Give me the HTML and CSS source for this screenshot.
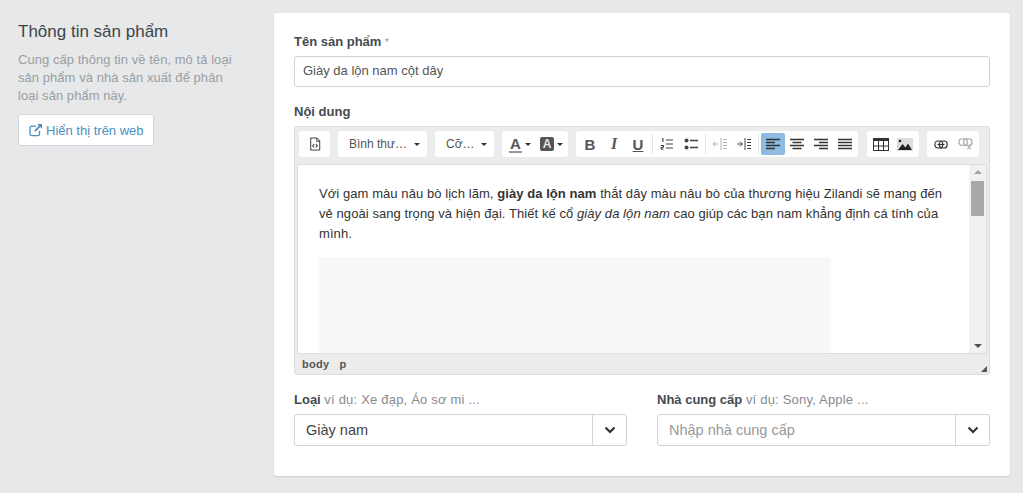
FILE: index.html
```html
<!DOCTYPE html>
<html lang="vi">
<head>
<meta charset="utf-8">
<title>Thông tin sản phẩm</title>
<link rel="stylesheet" href="styles.css">
</head>
<body>
<div class="page">
  <aside class="intro">
    <h2>Thông tin sản phẩm</h2>
    <p>Cung cấp thông tin về tên, mô tả loại sản phẩm và nhà sản xuất để phân loại sản phẩm này.</p>
    <a class="web-btn" href="#">
      <svg class="ext" viewBox="0 0 14 14" width="14" height="14"><path d="M10.500 8v3a1.600 1.600 0 0 1-1.600 1.600H2.600A1.600 1.600 0 0 1 1 11V4.800a1.600 1.600 0 0 1 1.600-1.600H7" fill="none" stroke="currentColor" stroke-width="1.300"/><path d="M8.200 1h4.800v4.800l-1.700-1.700L6.600 8.800 5.200 7.400 9.900 2.700z" fill="currentColor"/></svg>
      Hiển thị trên web</a>
  </aside>
  <main class="card">
    <div class="field">
      <label class="lbl top">Tên sản phẩm <span class="req">*</span></label>
      <div class="input">Giày da lộn nam cột dây</div>
    </div>
    <div class="field editor-field">
      <label class="lbl top">Nội dung</label>
      <div class="editor">
        <div class="toolbar">
          <div class="group"><span class="tb w31"><svg viewBox="0 0 14 16" width="12" height="14"><path d="M2 1h7l3.500 3.500V15H2z" fill="none" stroke="#444" stroke-width="1.200"/><path d="M9 1v4h3.500" fill="none" stroke="#444"/><path d="M6 8 4.300 10 6 12M8 8l1.700 2L8 12" fill="none" stroke="#333" stroke-width="1.200"/></svg></span></div>
          <div class="group drop w89"><span class="drop-text">Bình thư…</span><i class="caret"></i></div>
          <div class="group drop w59"><span class="drop-text">Cỡ…</span><i class="caret"></i></div>
          <div class="group">
            <span class="tb w33 color-a"><span class="font-a">A</span><i class="caret sm"></i></span>
            <span class="tb w33 color-b"><span class="back-a">A</span><i class="caret sm"></i></span>
          </div>
          <div class="group fmt-group">
            <span class="tb w24 fmt">B</span>
            <span class="tb w24 fmt it">I</span>
            <span class="tb w24 fmt un">U</span>
            <i class="sep"></i>
            <span class="tb w24"><svg viewBox="0 0 14 14" width="14" height="14"><path d="M6 3h7M6 7h7M6 11h7" stroke="#444" stroke-width="1.200"/><path d="M2 1.500h1V5M1 8.500h2.500v1.800H1v1.800h2.500" fill="none" stroke="#333"/></svg></span>
            <span class="tb w24"><svg viewBox="0 0 14 14" width="14" height="14"><circle cx="2.500" cy="3.500" r="2" fill="#444"/><circle cx="2.500" cy="10.500" r="2" fill="#444"/><path d="M6 3.500h8M6 10.500h8" stroke="#444" stroke-width="1.500"/></svg></span>
            <i class="sep"></i>
            <span class="tb w24 dim"><svg viewBox="0 0 14 14" width="14" height="14"><path d="M8 1v12M10 2.500h4M10 5.500h4M10 8.500h4M10 11.500h4" stroke="#444" stroke-width="1"/><path d="M5 7H0M2.500 4.500 0 7l2.500 2.500" fill="none" stroke="#444"/></svg></span>
            <span class="tb w24"><svg viewBox="0 0 14 14" width="14" height="14"><path d="M8 1v12M10 2.500h4M10 5.500h4M10 8.500h4M10 11.500h4" stroke="#444" stroke-width="1"/><path d="M0 7h5M3 4.500 5.500 7 3 9.500" fill="none" stroke="#444"/></svg></span>
            <i class="sep"></i>
            <span class="tb w24 active"><svg viewBox="0 0 14 12" width="14" height="12"><path d="M0 1.500h14M0 4.500h9M0 7.500h14M0 10.500h9" stroke="#333" stroke-width="1.500"/></svg></span>
            <span class="tb w24"><svg viewBox="0 0 14 12" width="14" height="12"><path d="M0 1.500h14M2.500 4.500h9M0 7.500h14M2.500 10.500h9" stroke="#333" stroke-width="1.500"/></svg></span>
            <span class="tb w24"><svg viewBox="0 0 14 12" width="14" height="12"><path d="M0 1.500h14M5 4.500h9M0 7.500h14M5 10.500h9" stroke="#333" stroke-width="1.500"/></svg></span>
            <span class="tb w24"><svg viewBox="0 0 14 12" width="14" height="12"><path d="M0 1.500h14M0 4.500h14M0 7.500h14M0 10.500h14" stroke="#333" stroke-width="1.500"/></svg></span>
          </div>
          <div class="group pad2 table-group">
            <span class="tb w24"><svg viewBox="0 0 16 13" width="16" height="13"><rect x=".5" y=".5" width="15" height="12" fill="#fff" stroke="#333"/><path d="M0 1.500h16" stroke="#333" stroke-width="3"/><path d="M5.500 3v10M10.500 3v10M0 8h16" stroke="#333"/></svg></span>
            <span class="tb w24"><svg viewBox="0 0 16 13" width="16" height="13"><rect width="16" height="13" fill="#ddd"/><path d="M1 12l4.500-6 3 3.500 2.500-4 4 6.500z" fill="#222"/><circle cx="3" cy="3" r="1.300" fill="#222"/></svg></span>
          </div>
          <div class="group pad2">
            <span class="tb w24"><svg viewBox="0 0 16 10" width="14" height="9"><rect x="1" y="1" width="9" height="8" rx="3.500" fill="none" stroke="#333" stroke-width="1.300"/><rect x="6" y="1" width="9" height="8" rx="3.500" fill="none" stroke="#333" stroke-width="1.300"/><path d="M4 5h8" stroke="#333" stroke-width="1.300"/></svg></span>
            <span class="tb w24 dim"><svg viewBox="0 0 16 13" width="15" height="12"><rect x="1" y="1" width="9" height="7" rx="3" fill="none" stroke="#444" stroke-width="1.500"/><rect x="6" y="1" width="9" height="7" rx="3" fill="none" stroke="#444" stroke-width="1.500"/><path d="M10 8l4 4M14 8l-4 4" stroke="#444" stroke-width="1.300"/></svg></span>
          </div>
        </div>
        <div class="edit-area">
          <div class="doc">
            <p>Với gam màu nâu bò lịch lãm, <b>giày da lộn nam</b> thắt dây màu nâu bò của thương hiệu Zilandi sẽ mang đến vẻ ngoài sang trọng và hiện đại. Thiết kế cổ <em>giày da lộn nam</em> cao giúp các bạn nam khẳng định cá tính của mình.</p>
            <div class="pic"></div>
          </div>
          <div class="scrollbar">
            <i class="arrow up"></i>
            <div class="track"><div class="thumb"></div></div>
            <i class="arrow down"></i>
          </div>
        </div>
        <div class="status"><span>body</span><span>p</span><i class="grip"></i></div>
      </div>
    </div>
    <div class="selects">
      <div class="sel-col">
        <label class="lbl top small"><b>Loại</b> <span class="hint">ví dụ: Xe đạp, Áo sơ mi ...</span></label>
        <div class="combo"><span class="val">Giày nam</span><span class="chev"><svg viewBox="0 0 12 8" width="12" height="8"><path d="M1.500 1.500 6 6l4.500-4.500" fill="none" stroke="#333" stroke-width="2.200"/></svg></span></div>
      </div>
      <div class="sel-col">
        <label class="lbl top small"><b>Nhà cung cấp</b> <span class="hint">ví dụ: Sony, Apple ...</span></label>
        <div class="combo"><span class="val ph">Nhập nhà cung cấp</span><span class="chev"><svg viewBox="0 0 12 8" width="12" height="8"><path d="M1.500 1.500 6 6l4.500-4.500" fill="none" stroke="#333" stroke-width="2.200"/></svg></span></div>
      </div>
    </div>
  </main>
</div>
</body>
</html>
```

FILE: styles.css
```css
* { box-sizing: border-box; }
html, body { margin: 0; height: 100%; }
body { background: #e6e8ea; font-family: "Liberation Sans", Arial, sans-serif; color: #333; overflow: hidden; }
.page { display: flex; align-items: flex-start; padding: 13px 13px 0 18px; gap: 36px; }
.intro { width: 220px; flex: none; padding-top: 9px; }
.intro h2 { margin: 0 0 9px; font-size: 17px; font-weight: 400; line-height: 20px; color: #3f444a; }
.intro p { margin: 0 0 9px; font-size: 13px; line-height: 18px; color: #9a9ea3; letter-spacing: .05px; }
.web-btn { display: inline-flex; align-items: center; gap: 3px; height: 32px; padding: 0 9px 0 10px; background: #fff; border: 1px solid #d3d6da; border-radius: 3px; color: #4a90c0; font-size: 13px; text-decoration: none; }
.card { flex: 1; height: 463px; background: #fff; border-radius: 3px; box-shadow: 0 1px 2px rgba(0,0,0,.12); padding: 20px; }
.lbl { display: block; font-size: 13px; font-weight: 700; line-height: 16px; color: #454a50; margin-bottom: 7px; }
.lbl.top { padding-top: 1px; margin-bottom: 6px; }
.req { color: #999; font-weight: 400; font-size: 10px; line-height: 1; }
.input { height: 31px; border: 1px solid #ced3d8; border-radius: 3px; padding: 0 8px; font-size: 13px; line-height: 28px; color: #555; }
.editor-field { margin-top: 16px; }
.editor { height: 249px; background: #ececec; border: 1px solid #dcdcdc; border-radius: 3px; display: flex; flex-direction: column; }
.toolbar { display: flex; height: 37px; flex: none; gap: 8px; padding: 4px 0 0 4px; }
.group { display: flex; align-items: center; height: 26px; background: #fff; border-radius: 3px; }
.pad2 { padding: 0 2px; }
.fmt-group { padding: 0 1px 0 2px; }
.table-group { margin-left: 1px; }
.tb { display: flex; align-items: center; justify-content: center; height: 22px; flex: none; }
.w31 { width: 31px; }
.w33 { width: 33px; }
.w24 { width: 24px; }
.w89 { width: 89px; }
.w59 { width: 59px; }
.drop { justify-content: space-between; padding: 0 7px 0 11px; font-size: 12px; color: #555; }
.caret { display: inline-block; width: 0; height: 0; border: 3px solid transparent; border-top: 3px solid #333; border-bottom: 0; margin-left: 3px; flex: none; }
.color-a, .color-b { justify-content: flex-start; }
.color-a { padding-left: 7px; }
.color-b { padding-left: 5px; }
.font-a { font-weight: 700; font-size: 15px; line-height: 15px; color: #555; border-bottom: 2px solid #999; padding: 0 1px; }
.back-a { display: inline-block; background: #555; color: #e4e4e4; font-weight: 700; font-size: 12px; line-height: 14px; width: 14px; text-align: center; border-radius: 2px; }
.fmt { font-size: 15px; font-weight: 700; color: #555; }
.it { font-style: italic; font-family: "Liberation Serif", serif; font-size: 16px; }
.un { text-decoration: underline; }
.sep { width: 1px; height: 20px; background: #e6e6e6; flex: none; margin: 0 2px; }
.active { background: #8fbbe0; border-radius: 2px; }
.dim { opacity: .4; }
.edit-area { height: 190px; flex: none; margin: 0 2px; background: #fff; border: 1px solid #ddd; display: flex; overflow: hidden; }
.doc { flex: 1; padding: 19px 25px 0 21px; min-width: 0; overflow: hidden; }
.doc p { margin: 0 0 13px; font-size: 13px; line-height: 20px; color: #333; letter-spacing: .07px; }
.pic { width: 512px; height: 120px; background: #f7f8f9; }
.scrollbar { width: 17px; flex: none; background: #f1f1f1; display: flex; flex-direction: column; align-items: center; }
.arrow { width: 0; height: 0; border: 4px solid transparent; flex: none; margin: 5px 0; }
.arrow.up { border-top: 0; border-bottom: 4px solid #a3a3a3; }
.arrow.down { border-bottom: 0; border-top: 4px solid #505050; }
.track { flex: 1; width: 100%; }
.thumb { width: 13px; height: 35px; margin: 2px 2px 0; background: #a8a8a8; }
.status { flex: 1; display: flex; align-items: center; gap: 10px; padding: 0 7px; font-size: 11px; font-weight: 700; color: #555; letter-spacing: .3px; position: relative; }
.grip { position: absolute; right: 2px; bottom: 2px; width: 0; height: 0; border-left: 6px solid transparent; border-bottom: 6px solid #555; }
.selects { display: flex; gap: 30px; margin-top: 16px; }
.sel-col { flex: 1; min-width: 0; }
.lbl.small { font-weight: 400; }
.lbl.small b { font-weight: 700; }
.hint { color: #868b92; letter-spacing: .2px; }
.combo { display: flex; height: 32px; border: 1px solid #ced3d8; border-radius: 3px; }
.val { flex: 1; padding: 0 11px; font-size: 14.500px; line-height: 30px; color: #444; }
.val.ph { color: #999; }
.chev { width: 34px; flex: none; border-left: 1px solid #d5d8dc; display: flex; align-items: center; justify-content: center; }
```
